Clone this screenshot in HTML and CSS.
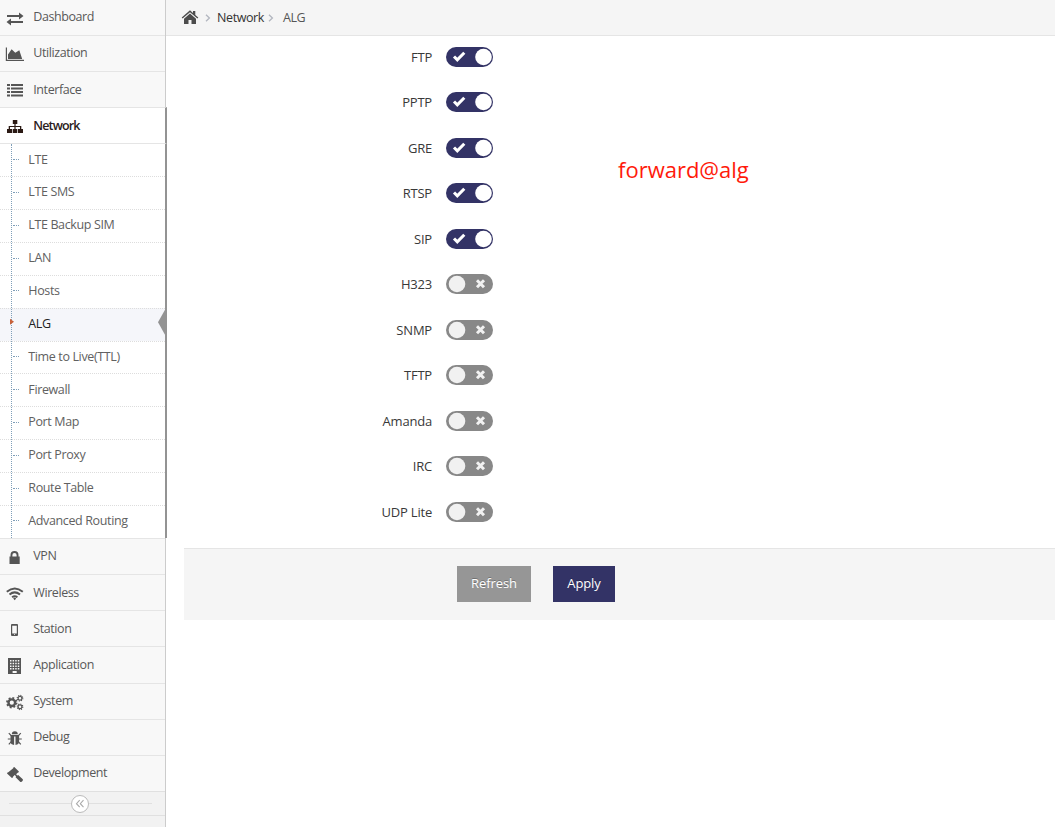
FILE: index.html
```
<!DOCTYPE html>
<html lang="en">
<head>
<meta charset="utf-8">
<title>Network - ALG</title>
<link rel="stylesheet" href="styles.css">
</head>
<body>
<div class="app">
<aside class="sidebar">
<ul class="nav">
<li class="item"><svg class="icon" viewBox="0 0 20 18"><path d="M2 6h12V3.500L18.500 7 14 10.500V8H2zM18 12H6V9.500L1.500 13 6 16.500V14h12z"/></svg><span>Dashboard</span></li>
<li class="item"><svg class="icon" viewBox="0 0 20 18"><path d="M.8 2.500H2v12.300h17V16H.8zM3 14V9.500l3.600-5.300 3.700 3.500 4-2.500L17.200 14z"/></svg><span>Utilization</span></li>
<li class="item"><svg class="icon" viewBox="0 0 20 18"><path d="M2 3h3v2H2zM6 3h12v2H6zM2 6.500h3v2H2zM6 6.500h12v2H6zM2 10h3v2H2zM6 10h12v2H6zM2 13.500h3v2H2zM6 13.500h12v2H6z"/></svg><span>Interface</span></li>
<li class="item current"><svg class="icon" viewBox="0 0 20 18"><path d="M7.800 3h4.500v4h-1.700v2h5.700v3H18v4h-5v-4h2v-1.900h-4.400V12h1.700v4H7.700v-4h1.700v-1.900H5V12h2v4H2v-4h1.700V9h5.700V7H7.800z"/></svg><span>Network</span></li>
</ul>
<ul class="submenu">
<li>LTE</li><li>LTE SMS</li><li>LTE Backup SIM</li><li>LAN</li><li>Hosts</li><li class="active">ALG</li><li>Time to Live(TTL)</li><li>Firewall</li><li>Port Map</li><li>Port Proxy</li><li>Route Table</li><li>Advanced Routing</li>
</ul>
<ul class="nav lower">
<li class="item"><svg class="icon" viewBox="0 0 20 18"><path fill-rule="evenodd" d="M4.500 8.500h1V7a4 4 0 0 1 8 0v1.500h1.200V16H4.500zM7.400 8.500h4.200V7a2.100 2.100 0 0 0-4.200 0z"/></svg><span>VPN</span></li>
<li class="item"><svg class="icon" viewBox="0 0 20 18"><g class="wave"><path d="M1.800 7.800Q9.700 1.300 17.800 7.800M4.500 10.500Q9.700 6.200 15 10.500M7.100 13.200Q9.700 11.200 12.400 13.200"/></g><path d="m8.200 14.500 1.500-1 1.500 1-1.500 1.700z"/></svg><span>Wireless</span></li>
<li class="item"><svg class="icon" viewBox="0 0 20 18"><path fill-rule="evenodd" d="M7 4h5q1 0 1 1v10q0 1-1 1H7q-1 0-1-1V5q0-1 1-1zm.2 1.800v7.700h4.600V5.800zM9 14.200v.8h1v-.8z"/></svg><span>Station</span></li>
<li class="item"><svg class="icon" viewBox="0 0 20 18"><path fill-rule="evenodd" d="M3 2h13v16H3zm2 2v1.500h1.500V4zm2.600 0v1.500h1.500V4zm2.600 0v1.500h1.500V4zm2.600 0v1.500h1.500V4zM5 6.700v1.500h1.500V6.700zm2.600 0v1.500h1.500V6.700zm2.600 0v1.500h1.500V6.700zm2.600 0v1.500h1.500V6.700zM5 9.400v1.500h1.500V9.400zm2.600 0v1.500h1.500V9.400zm2.600 0v1.500h1.500V9.400zm2.600 0v1.500h1.500V9.400zM5 12.100v1.500h1.500v-1.500zm2.600 0v1.500h1.500v-1.500zm2.600 0v1.500h1.500v-1.500zm2.600 0v1.500h1.500v-1.500zM7.600 15v2h4.100v-2z"/></svg><span>Application</span></li>
<li class="item"><svg class="icon" viewBox="0 0 20 18"><g class="gear"><circle cx="6.800" cy="9.700" r="3.300"/><circle class="teeth" cx="6.800" cy="9.700" r="4.800"/></g><g class="gear small"><circle cx="15" cy="5.200" r="1.900"/><circle class="teeth" cx="15" cy="5.200" r="2.800"/><circle cx="15" cy="13.800" r="1.900"/><circle class="teeth" cx="15" cy="13.800" r="2.800"/></g></svg><span>System</span></li>
<li class="item"><svg class="icon" viewBox="0 0 20 18"><path d="M6.800 5.200a3 3 0 0 1 6 0zM5.500 6h8.600v6.500q0 3-3.600 3.500V7.500H9.100V16q-3.600-.5-3.600-3.500z"/><path class="legs" d="m3.800 4.200 2.400 2.500m9.600-2.500-2.400 2.500M2.800 10h3m8 0h3M3.800 15.300l2.500-2.700m9.500 2.700-2.500-2.700"/></svg><span>Debug</span></li>
<li class="item"><svg class="icon" viewBox="0 0 20 18"><path d="m8.300 2.500 1-.5 4.600 4.600-.5 1-.7.100-1.600 1.600 1.300 1.200.8-.5 4.600 4.300q.4.900-.3 1.600l-.9.900q-.8.600-1.500 0l-4.500-4.600.4-.9-1.300-1.200-1.700 1.600-.1.800-1 .5L2 8.400l.5-1 .8-.1 4.900-4z"/></svg><span>Development</span></li>
</ul>
<div class="collapse"><span class="collapse-button"><svg viewBox="0 0 10 10"><path d="M4.700 1.200 1.500 4.700l3.200 3.500M8.500 1.200 5.300 4.700l3.200 3.500"/></svg></span></div>
</aside>
<main class="main">
<nav class="breadcrumb">
<svg class="home" viewBox="0 0 18 16"><path d="m9 1.300 3 2.600V2h2.300v4l3 2.600-.9 1L9 3.300 1.600 9.600l-.9-1z"/><path d="m9 4.600 6 5.100V15h-4.500v-4h-3v4H3V9.700z"/></svg>
<svg class="chev" viewBox="0 0 6 8"><path d="m1 .8 3.400 3.200L1 7.200"/></svg>
<span class="crumb">Network</span>
<svg class="chev second" viewBox="0 0 6 8"><path d="m1 .8 3.400 3.200L1 7.200"/></svg>
<span class="crumb last">ALG</span>
</nav>
<form class="form">
<div class="row"><label>FTP</label><span class="switch on"></span></div>
<div class="row"><label>PPTP</label><span class="switch on"></span></div>
<div class="row"><label>GRE</label><span class="switch on"></span></div>
<div class="row"><label>RTSP</label><span class="switch on"></span></div>
<div class="row"><label>SIP</label><span class="switch on"></span></div>
<div class="row"><label>H323</label><span class="switch off"></span></div>
<div class="row"><label>SNMP</label><span class="switch off"></span></div>
<div class="row"><label>TFTP</label><span class="switch off"></span></div>
<div class="row"><label>Amanda</label><span class="switch off"></span></div>
<div class="row"><label>IRC</label><span class="switch off"></span></div>
<div class="row"><label>UDP Lite</label><span class="switch off"></span></div>
</form>
<div class="actions"><button class="btn refresh" type="button">Refresh</button><button class="btn apply" type="button">Apply</button></div>
<div class="note">forward@alg</div>
</main>
</div>
<script src="switches.js"></script>
</body>
</html>
```
FILE: switches.js
```
const marks = {
  on: '<svg viewBox="0 0 47 20"><path class="mark" d="m8 9.500 3.300 3.400 7-7.200"/><circle cx="37.500" cy="10" r="8.300"/></svg>',
  off: '<svg viewBox="0 0 47 20"><circle cx="11" cy="10" r="8.300"/><path class="mark" d="m31 6.300 7 7m0-7-7 7"/></svg>'
};
document.querySelectorAll('.switch').forEach(el => {
  el.innerHTML = el.classList.contains('on') ? marks.on : marks.off;
});
```
FILE: styles.css
```
* { box-sizing: border-box; }
body { margin: 0; background: #fff; color: #393939; font: 13px/20px "Open Sans", sans-serif; overflow: hidden; }
ul { list-style: none; margin: 0; padding: 0; }
.app { display: flex; height: 827px; }
.sidebar { width: 166px; flex: none; background: #f2f2f2; border-right: 1px solid #ccc; }
.nav { margin-top: -1.15px; }
.nav.lower { margin-top: 0; }
.item { height: 36.15px; border-top: 1px solid #e5e5e5; background: #f8f8f8; color: #585858; display: flex; align-items: flex-start; padding: 8px 0 0 5px; font-size: 12.5px; letter-spacing: -0.42px; }
.item span { margin: -0.6px 0 0 8.3px; }
.icon { width: 20px; height: 18px; fill: #555; margin-top: 1px; }
.item.current { background: #fff; color: #2b2020; font-weight: 600; letter-spacing: -0.85px; width: 167px; border-right: 2px solid #939393; position: relative; }
.current .icon { fill: #2b1a14; }
.submenu { position: relative; width: 167px; height: 394.6px; background: #fff; border-right: 2px solid #939393; border-top: 1px solid #e5e5e5; margin-top: 0; }
.submenu::before { content: ""; position: absolute; z-index: 1; left: 11px; top: 0; bottom: 0; border-left: 1px dotted #7f9fb9; }
.submenu li { position: relative; height: 32.87px; padding: 5.1px 0 0 28.3px; border-top: 1px dotted #ddd; color: #616161; font-size: 12.5px; letter-spacing: -0.37px; }
.submenu li:first-child { margin-top: -1px; border-top-color: transparent; }
.submenu li::before { content: ""; position: absolute; left: 13px; top: 14.6px; width: 6px; border-top: 1px dotted #7f9fb9; }
.submenu .active { background: #f5f6fa; color: #222; }
.submenu .active::before { z-index: 2; left: 10px; top: 10px; width: 4px; height: 6px; border: 0; background: #c86139; clip-path: polygon(0 0, 100% 50%, 0 100%); }
.submenu .active::after { content: ""; position: absolute; right: 0; top: 1px; width: 7px; height: 25px; background: #939393; clip-path: polygon(100% 0, 0 50%, 100% 100%); }
.wave, .legs { fill: none; stroke: #555; stroke-width: 2; }
.legs { stroke-width: 1.2; }
.gear { fill: none; stroke: #555; stroke-width: 2.4; }
.gear .teeth { stroke-width: 1.8; stroke-dasharray: 1.885 1.885; }
.gear.small { stroke-width: 1.2; }
.gear.small .teeth { stroke-width: 1.1; stroke-dasharray: 1.1 1.1; }
.collapse { height: 25px; border-top: 1px solid #e0e0e0; border-bottom: 1px solid #e0e0e0; display: flex; align-items: center; padding: 0 13px 0 9px; }
.collapse::before { content: ""; height: 1px; width: 62px; background: #e0e0e0; }
.collapse::after { content: ""; height: 1px; flex: 1; background: #e0e0e0; }
.collapse-button { width: 18px; height: 18px; border: 1px solid #bbb; border-radius: 50%; background: #fff; display: flex; align-items: center; justify-content: center; }
.collapse-button svg { width: 10px; height: 10px; fill: none; stroke: #aaa; stroke-width: 1.1; }
.main { position: relative; flex: 1; }
.breadcrumb { height: 36px; background: #f5f5f5; border-bottom: 1px solid #e5e5e5; display: flex; align-items: center; padding-left: 15px; }
.home { width: 18px; height: 16px; fill: #4c4c4c; margin-top: -2px; }
.chev { width: 6px; height: 8px; fill: none; stroke: #b2b6bf; stroke-width: 1.3; margin: 0 6px 0 6px; }
.chev.second { margin: 0 9px 0 4px; }
.crumb { font-size: 12.5px; letter-spacing: -0.4px; color: #333; margin-top: 1px; }
.crumb.last { color: #555; }
.form { padding-top: 10.9px; height: 512px; }
.row { height: 45.5px; display: flex; align-items: flex-start; }
.row label { width: 266px; text-align: right; letter-spacing: -0.2px; }
.switch { width: 47px; height: 20px; margin-left: 14px; border-radius: 10px; background: #333366; }
.switch.off { background: #888; }
.switch svg { display: block; width: 47px; height: 20px; fill: #fff; }
.switch.off svg { fill: #f1f1f1; }
.mark { fill: none; stroke: #fff; stroke-width: 3; }
.off .mark { stroke: #f1f1f1; }
.actions { margin-left: 18px; height: 72px; background: #f5f5f5; border-top: 1px solid #e5e5e5; padding: 17px 0 0 273px; display: flex; gap: 22px; }
.btn { height: 36px; border: 0; padding: 0 0 2px; color: #fff; font: 13px/20px "Open Sans", sans-serif; letter-spacing: -0.1px; text-shadow: 0 -1px 0 rgba(0,0,0,.25); }
.refresh { width: 74px; background: #969696; }
.apply { width: 62px; background: #333366; }
.note { position: absolute; left: 452px; top: 154px; font-size: 22px; line-height: 30px; color: #ff1a0a; white-space: nowrap; }
```
